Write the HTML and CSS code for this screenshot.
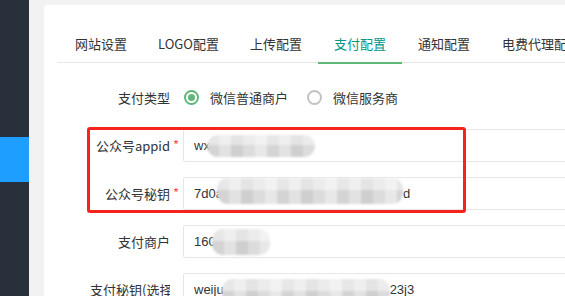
FILE: index.html
```html
<!DOCTYPE html>
<html lang="zh-CN">
<head>
    <meta charset="UTF-8">
    <meta name="viewport" content="width=device-width, initial-scale=1.0">
    <title>系统设置</title>
    <link rel="stylesheet" href="styles.css">
</head>
<body>
<div class="page">
    <div class="side">
        <div class="side-item active"></div>
    </div>

    <div class="main">
        <div class="card">
            <ul class="tab-title">
                <li>网站设置</li>
                <li>LOGO配置</li>
                <li>上传配置</li>
                <li class="this">支付配置</li>
                <li>通知配置</li>
                <li>电费代理配置</li>
            </ul>

            <form class="form">
                <div class="form-item">
                    <label class="form-label">支付类型</label>
                    <div class="form-block radios">
                        <span class="radio checked"><i class="radio-icon"></i>微信普通商户</span>
                        <span class="radio"><i class="radio-icon"></i>微信服务商</span>
                    </div>
                </div>
                <div class="form-item">
                    <label class="form-label required">公众号appid</label>
                    <div class="input">wx<span class="mask mask-appid"></span></div>
                </div>
                <div class="form-item">
                    <label class="form-label required">公众号秘钥</label>
                    <div class="input">7d0a<span class="mask mask-secret"></span>d</div>
                </div>
                <div class="form-item">
                    <label class="form-label">支付商户</label>
                    <div class="input">160<span class="mask mask-mch"></span></div>
                </div>
                <div class="form-item">
                    <label class="form-label">支付秘钥(选择服务商时不填)</label>
                    <div class="input">weiju<span class="mask mask-key"></span>23j3</div>
                </div>
            </form>
        </div>
    </div>

    <!-- 截图标注框 -->
    <div class="mark"></div>
</div>
</body>
</html>
```

FILE: styles.css
```css
* {
    box-sizing: border-box;
}
body {
    margin: 0;
    background-color: #f2f2f2;
    font-family: "Noto Sans CJK SC", "Liberation Sans", sans-serif;
    font-size: 13px;
    color: #333;
    overflow: hidden;
}
.page {
    position: relative;
    display: flex;
    height: 296px;
}
.side {
    width: 29px;
    flex-shrink: 0;
    background-color: #28303b;
    padding-top: 137px;
}
.side-item {
    height: 45px;
}
.side-item.active {
    background-color: #1e9fff;
}
.main {
    padding: 5px 0 0 15px;
}
.card {
    width: 620px;
    height: 320px;
    background-color: #fff;
    border-radius: 4px;
    padding: 20px 0 0 13px;
}
.tab-title {
    display: flex;
    margin: 0;
    padding: 0 0 0 2px;
    list-style: none;
    height: 38px;
    border-bottom: 1px solid #e6e6e6;
    white-space: nowrap;
}
.tab-title li {
    position: relative;
    padding: 0 16px;
    line-height: 37px;
    font-size: 13px;
    color: #333;
}
.tab-title li:nth-child(2) {
    padding: 0 15px;
}
.tab-title li.this {
    color: #009688;
}
.tab-title li.this::after {
    content: "";
    position: absolute;
    left: 0;
    right: 0;
    bottom: -2px;
    height: 2px;
    background-color: #5fb878;
}
.form {
    margin-top: 18px;
}
.form-item {
    display: flex;
    align-items: center;
    height: 33px;
    margin-bottom: 15px;
}
.form-label {
    position: relative;
    width: 113px;
    flex-shrink: 0;
    margin-right: 13px;
    padding-left: 33px;
    text-align: right;
    white-space: nowrap;
    overflow: hidden;
    line-height: 33px;
}
.form-label.required {
    overflow: visible;
}
.form-label.required::after {
    content: "*";
    position: absolute;
    right: -9px;
    top: -1px;
    color: #ff4d3d;
}
.radios {
    display: flex;
    align-items: center;
}
.radio {
    display: flex;
    align-items: center;
    margin-right: 18px;
}
.radio-icon {
    width: 15px;
    height: 15px;
    border: 2px solid #c2c2c2;
    border-radius: 50%;
    margin: 0 11px 0 1px;
    display: flex;
    align-items: center;
    justify-content: center;
}
.radio.checked .radio-icon {
    border-color: #5fb878;
}
.radio.checked .radio-icon::after {
    content: "";
    width: 7px;
    height: 7px;
    border-radius: 50%;
    background-color: #5fb878;
}
.input {
    width: 420px;
    height: 33px;
    flex-shrink: 0;
    border: 1px solid #e6e6e6;
    border-radius: 2px;
    padding-left: 10px;
    line-height: 31px;
    font-family: "Liberation Sans", Arial, sans-serif;
    font-size: 13px;
    white-space: nowrap;
    display: flex;
    align-items: center;
}
/* 打码区域 */
.mask {
    display: inline-block;
    height: 22px;
    border-radius: 11px;
    filter: blur(0.8px);
    background:
        linear-gradient(to bottom, rgba(255,255,255,0.45) 0, rgba(255,255,255,0.45) 45%, rgba(255,255,255,0) 45%),
        repeating-linear-gradient(to right, #d4d4d4 0, #d4d4d4 12px, #e2e2e2 12px, #e2e2e2 24px, #cfcfcf 24px, #cfcfcf 36px, #dcdcdc 36px, #dcdcdc 48px, #e8e8e8 48px, #e8e8e8 60px);
}
.mask-appid {
    width: 108px;
    margin-left: -3px;
}
.mask-secret {
    width: 186px;
    height: 26px;
    margin-left: -6px;
    margin-top: -6px;
}
.mask-mch {
    width: 58px;
    height: 26px;
    margin-left: -4px;
}
.mask-key {
    width: 168px;
    height: 26px;
    margin-left: -2px;
    margin-top: 4px;
}
.mark {
    position: absolute;
    left: 87px;
    top: 127px;
    width: 379px;
    height: 86px;
    border: 3px solid #f5231c;
    border-radius: 3px;
}
```
